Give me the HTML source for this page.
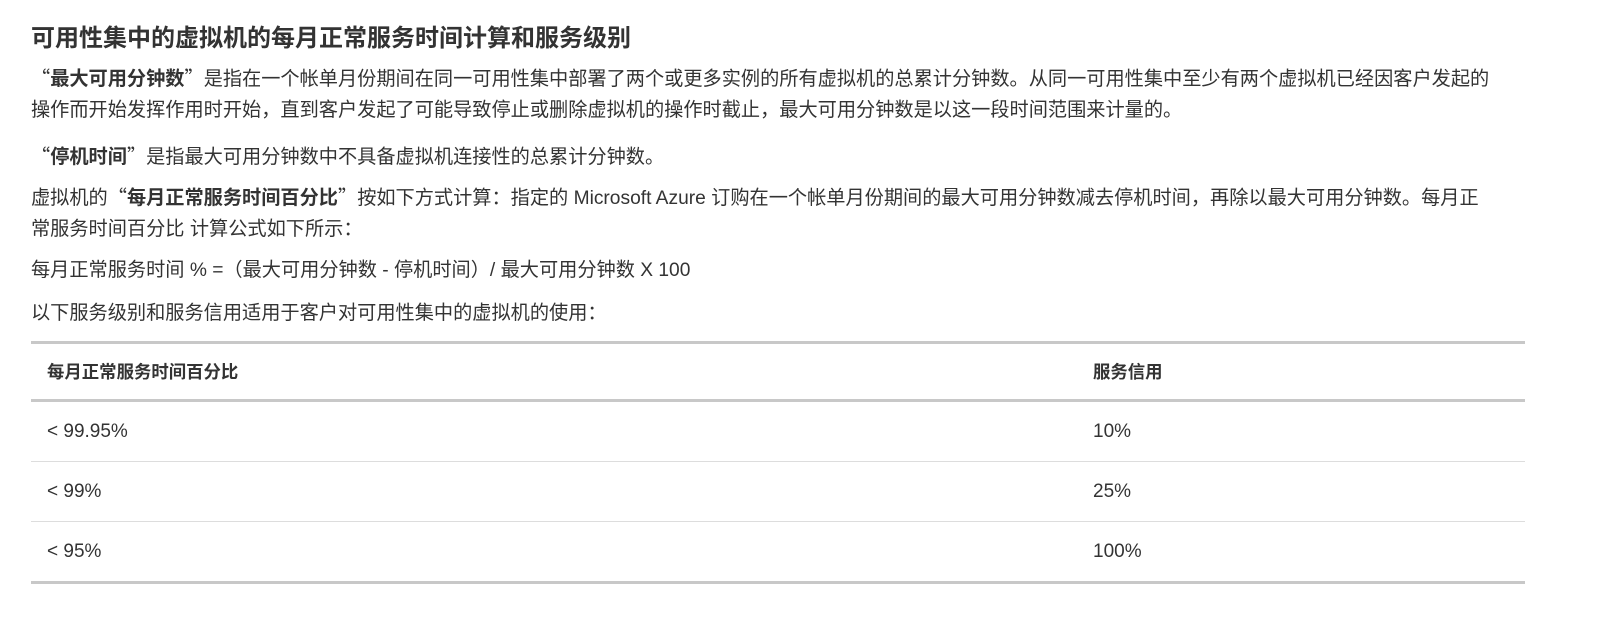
<!DOCTYPE html>
<html><head><meta charset="utf-8"><style>
body{margin:0;background:#fff;font-family:"Liberation Sans","Noto Sans CJK SC",sans-serif;color:#333;}
h2{position:absolute;left:31px;top:22px;margin:0;font-size:24px;line-height:34px;font-weight:bold;color:#333;}
p{position:absolute;left:31px;margin:0;font-size:19.2px;line-height:31px;width:1560px;white-space:nowrap;}
q{quotes:none;font-family:"Noto Sans CJK SC",sans-serif;}
table{position:absolute;left:31px;top:341px;width:1494px;border-collapse:collapse;font-size:19px;}
th{font-size:17.4px;font-weight:bold;text-align:left;height:55px;padding:0 0 0 16px;border-top:3px solid #c8c8c8;border-bottom:3px solid #c8c8c8;}
td{height:59px;padding:0 0 0 16px;border-bottom:1px solid #ddd;}
tr:last-child td{border-bottom:3px solid #c8c8c8;}
</style></head><body>
<h2>可用性集中的虚拟机的每月正常服务时间计算和服务级别</h2>
<p style="top:62px"><q>“</q><b>最大可用分钟数</b><q>”</q>是指在一个帐单月份期间在同一可用性集中部署了两个或更多实例的所有虚拟机的总累计分钟数。从同一可用性集中至少有两个虚拟机已经因客户发起的<br>操作而开始发挥作用时开始，直到客户发起了可能导致停止或删除虚拟机的操作时截止，最大可用分钟数是以这一段时间范围来计量的。</p>
<p style="top:140px"><q>“</q><b>停机时间</b><q>”</q>是指最大可用分钟数中不具备虚拟机连接性的总累计分钟数。</p>
<p style="top:181px">虚拟机的<q>“</q><b>每月正常服务时间百分比</b><q>”</q>按如下方式计算：指定的 Microsoft Azure 订购在一个帐单月份期间的最大可用分钟数减去停机时间，再除以最大可用分钟数。每月正<br>常服务时间百分比 计算公式如下所示：</p>
<p style="top:255px">每月正常服务时间 % =（最大可用分钟数 - 停机时间）/ 最大可用分钟数 X 100</p>
<p style="top:298px">以下服务级别和服务信用适用于客户对可用性集中的虚拟机的使用：</p>
<table>
<tr><th style="width:1030px">每月正常服务时间百分比</th><th>服务信用</th></tr>
<tr><td>&lt; 99.95%</td><td>10%</td></tr>
<tr><td>&lt; 99%</td><td>25%</td></tr>
<tr><td>&lt; 95%</td><td>100%</td></tr>
</table>
</body></html>
